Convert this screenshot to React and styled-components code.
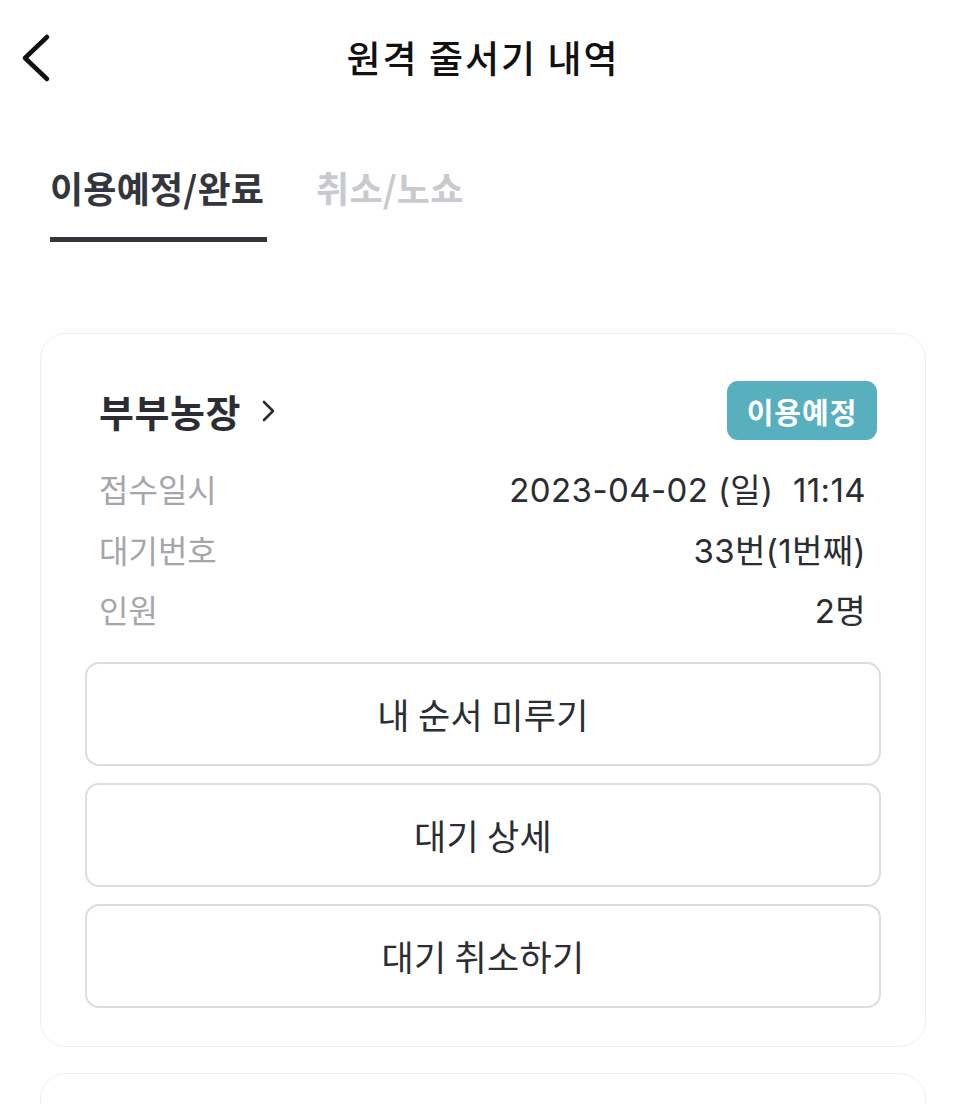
import React from "react";
import styled, { createGlobalStyle } from "styled-components";

const GlobalStyle = createGlobalStyle`
  * { box-sizing: border-box; }
  body {
    margin: 0;
    background: #ffffff;
    font-family: "Noto Sans CJK KR", "Noto Sans", sans-serif;
    color: #2b2d33;
  }
`;

const Page = styled.div`
  width: 966px;
  height: 1104px;
  overflow: hidden;
  background: #fff;
`;

const Header = styled.header`
  position: relative;
  height: 116px;
  display: flex;
  align-items: center;
  justify-content: center;
  padding-bottom: 2px;
`;

const BackButton = styled.button`
  position: absolute;
  left: 16px;
  top: 32px;
  width: 36px;
  height: 52px;
  border: none;
  background: none;
  padding: 0;
  display: flex;
  align-items: center;
  justify-content: center;
`;

const Title = styled.h1`
  margin: 0;
  font-size: 37px;
  font-weight: 500;
  letter-spacing: 2px;
  color: #111;
`;

const Tabs = styled.nav`
  display: flex;
  gap: 52px;
  padding-left: 50px;
`;

const Tab = styled.div`
  position: relative;
  height: 127px;
  padding-top: 46px;
  font-size: 36px;
  font-weight: 700;
  letter-spacing: 0.2px;
  line-height: 50px;
  color: ${(p) => (p.$active ? "#33363d" : "#c9cacf")};

  &::after {
    content: "";
    display: ${(p) => (p.$active ? "block" : "none")};
    position: absolute;
    left: 0;
    right: -3px;
    top: 121px;
    height: 5px;
    background: #33363d;
  }
`;

const List = styled.div`
  display: flex;
  flex-direction: column;
  gap: 26px;
  padding: 90px 40px 0 40px;
`;

const Card = styled.section`
  border: 1px solid #efeff2;
  border-radius: 26px;
  padding: 47px 44px 38px 44px;
`;

const CardHead = styled.div`
  display: flex;
  align-items: center;
  justify-content: space-between;
  padding: 0 4px 0 14px;
  height: 59px;
`;

const StoreName = styled.div`
  display: flex;
  align-items: center;
  gap: 20px;
  font-size: 38px;
  font-weight: 700;
  letter-spacing: 0.5px;
  color: #2b2d33;
`;

const Badge = styled.span`
  display: inline-flex;
  align-items: center;
  justify-content: center;
  height: 59px;
  width: 150px;
  border-radius: 11px;
  background: #58afbd;
  color: #fff;
  font-size: 29px;
  font-weight: 700;
  letter-spacing: 1px;
`;

const InfoList = styled.dl`
  margin: 18px 0 22px 0;
  padding: 0 15px 0 14px;
`;

const InfoRow = styled.div`
  display: flex;
  justify-content: space-between;
  align-items: center;
  height: 60.5px;
`;

const Label = styled.dt`
  font-size: 32px;
  color: #a5a6ab;
`;

const Value = styled.dd`
  margin: 0;
  font-family: "Inter", "Noto Sans CJK KR", sans-serif;
  font-size: 33px;
  color: #2b2d33;
  letter-spacing: 0.4px;
  white-space: pre;
`;

const Actions = styled.div`
  display: flex;
  flex-direction: column;
  gap: 17px;
`;

const ActionButton = styled.button`
  height: 104px;
  width: 100%;
  border: 2px solid #dcdde2;
  border-radius: 14px;
  background: #fff;
  font-family: inherit;
  font-size: 35px;
  color: #2b2d33;
  letter-spacing: 0.3px;
`;

const BackIcon = () => (
  <svg width="36" height="52" viewBox="0 0 36 52" fill="none">
    <path
      d="M31 5 L9 26 L31 47"
      stroke="#111"
      strokeWidth="4.5"
      strokeLinecap="round"
      strokeLinejoin="round"
    />
  </svg>
);

const ChevronRight = () => (
  <svg width="16" height="24" viewBox="0 0 16 24" fill="none">
    <path
      d="M3 3 L12 12 L3 21"
      stroke="#2b2d33"
      strokeWidth="2.6"
      strokeLinecap="round"
      strokeLinejoin="round"
    />
  </svg>
);

const info = [
  { label: "접수일시", value: "2023-04-02 (일)  11:14" },
  { label: "대기번호", value: "33번(1번째)" },
  { label: "인원", value: "2명" },
];

const actions = ["내 순서 미루기", "대기 상세", "대기 취소하기"];

export default function App() {
  return (
    <Page>
      <GlobalStyle />
      <Header>
        <BackButton aria-label="뒤로">
          <BackIcon />
        </BackButton>
        <Title>원격 줄서기 내역</Title>
      </Header>
      <Tabs>
        <Tab $active>이용예정/완료</Tab>
        <Tab>취소/노쇼</Tab>
      </Tabs>
      <List>
        <Card>
          <CardHead>
            <StoreName>
              부부농장
              <ChevronRight />
            </StoreName>
            <Badge>이용예정</Badge>
          </CardHead>
          <InfoList>
            {info.map((row) => (
              <InfoRow key={row.label}>
                <Label>{row.label}</Label>
                <Value>{row.value}</Value>
              </InfoRow>
            ))}
          </InfoList>
          <Actions>
            {actions.map((a) => (
              <ActionButton key={a}>{a}</ActionButton>
            ))}
          </Actions>
        </Card>
        <Card />
      </List>
    </Page>
  );
}
